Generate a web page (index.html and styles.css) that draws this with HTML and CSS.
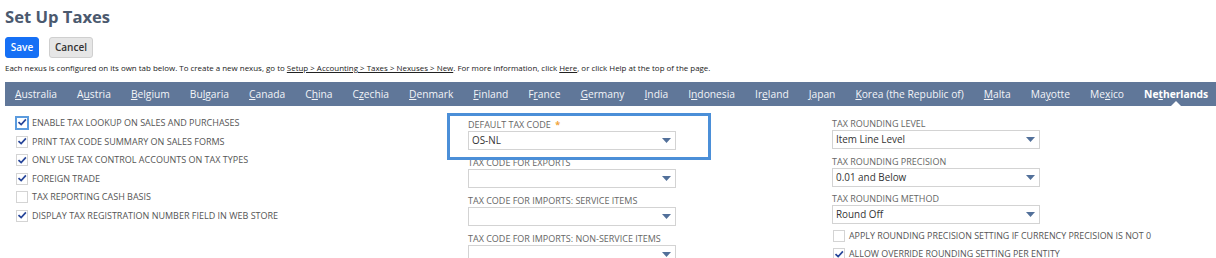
FILE: index.html
```html
<!DOCTYPE html>
<html lang="en">
<head>
<meta charset="utf-8">
<title>Set Up Taxes</title>
<link rel="stylesheet" href="styles.css">
</head>
<body>
<div class="page">
  <h1 class="title">Set Up Taxes</h1>
  <div class="buttons">
    <button class="btn btn-primary">Save</button>
    <button class="btn btn-secondary">Cancel</button>
  </div>
  <p class="info">Each nexus is configured on its own tab below. To create a new nexus, go to <a href="#">Setup &gt; Accounting &gt; Taxes &gt; Nexuses &gt; New</a>. For more information, click <a href="#">Here</a>, or click Help at the top of the page.</p>
  <nav class="tabs">
    <span class="tab"><u>A</u>ustralia</span>
    <span class="tab">A<u>u</u>stria</span>
    <span class="tab"><u>B</u>elgium</span>
    <span class="tab">Bu<u>l</u>garia</span>
    <span class="tab"><u>C</u>anada</span>
    <span class="tab">C<u>h</u>ina</span>
    <span class="tab">C<u>z</u>echia</span>
    <span class="tab"><u>D</u>enmark</span>
    <span class="tab"><u>F</u>inland</span>
    <span class="tab">F<u>r</u>ance</span>
    <span class="tab"><u>G</u>ermany</span>
    <span class="tab"><u>I</u>ndia</span>
    <span class="tab">I<u>n</u>donesia</span>
    <span class="tab">Ir<u>e</u>land</span>
    <span class="tab"><u>J</u>apan</span>
    <span class="tab"><u>K</u>orea (the Republic of)</span>
    <span class="tab"><u>M</u>alta</span>
    <span class="tab">Ma<u>y</u>otte</span>
    <span class="tab">Me<u>x</u>ico</span>
    <span class="tab tab-active">Ne<u>t</u>herlands</span>
  </nav>
  <div class="form">
    <div class="col col-left">
      <div class="check-row"><span class="cb cb-focus"><svg viewBox="0 0 12 12" class="tick"><path d="M2.5 6.2 L5 8.6 L10 3"/></svg></span><span class="cb-label">Enable tax lookup on sales and purchases</span></div>
      <div class="check-row"><span class="cb"><svg viewBox="0 0 12 12" class="tick"><path d="M2.5 6.2 L5 8.6 L10 3"/></svg></span><span class="cb-label">Print tax code summary on sales forms</span></div>
      <div class="check-row"><span class="cb"><svg viewBox="0 0 12 12" class="tick"><path d="M2.5 6.2 L5 8.6 L10 3"/></svg></span><span class="cb-label">Only use tax control accounts on tax types</span></div>
      <div class="check-row"><span class="cb"><svg viewBox="0 0 12 12" class="tick"><path d="M2.5 6.2 L5 8.6 L10 3"/></svg></span><span class="cb-label">Foreign trade</span></div>
      <div class="check-row"><span class="cb cb-empty"></span><span class="cb-label">Tax reporting cash basis</span></div>
      <div class="check-row"><span class="cb"><svg viewBox="0 0 12 12" class="tick"><path d="M2.5 6.2 L5 8.6 L10 3"/></svg></span><span class="cb-label">Display tax registration number field in web store</span></div>
    </div>
    <div class="col col-mid">
      <div class="field">
        <div class="field-label">Default tax code <span class="req">*</span></div>
        <div class="select"><span class="select-val">OS-NL</span><svg class="arrow" viewBox="0 0 9 5"><polygon points="0,0 9,0 4.5,5"/></svg></div>
      </div>
      <div class="field">
        <div class="field-label">Tax code for exports</div>
        <div class="select"><span class="select-val"></span><svg class="arrow" viewBox="0 0 9 5"><polygon points="0,0 9,0 4.5,5"/></svg></div>
      </div>
      <div class="field">
        <div class="field-label">Tax code for imports: service items</div>
        <div class="select"><span class="select-val"></span><svg class="arrow" viewBox="0 0 9 5"><polygon points="0,0 9,0 4.5,5"/></svg></div>
      </div>
      <div class="field">
        <div class="field-label">Tax code for imports: non-service items</div>
        <div class="select"><span class="select-val"></span><svg class="arrow" viewBox="0 0 9 5"><polygon points="0,0 9,0 4.5,5"/></svg></div>
      </div>
    </div>
    <div class="col col-right">
      <div class="field field-r">
        <div class="field-label">Tax rounding level</div>
        <div class="select"><span class="select-val">Item Line Level</span><svg class="arrow" viewBox="0 0 9 5"><polygon points="0,0 9,0 4.5,5"/></svg></div>
      </div>
      <div class="field field-r">
        <div class="field-label">Tax rounding precision</div>
        <div class="select"><span class="select-val">0.01 and Below</span><svg class="arrow" viewBox="0 0 9 5"><polygon points="0,0 9,0 4.5,5"/></svg></div>
      </div>
      <div class="field field-r">
        <div class="field-label">Tax rounding method</div>
        <div class="select"><span class="select-val">Round Off</span><svg class="arrow" viewBox="0 0 9 5"><polygon points="0,0 9,0 4.5,5"/></svg></div>
      </div>
      <div class="right-checks">
        <div class="check-row check-row-r"><span class="cb cb-empty"></span><span class="cb-label">Apply rounding precision setting if currency precision is not 0</span></div>
        <div class="check-row check-row-r"><span class="cb"><svg viewBox="0 0 12 12" class="tick"><path d="M2.5 6.2 L5 8.6 L10 3"/></svg></span><span class="cb-label">Allow override rounding setting per entity</span></div>
      </div>
    </div>
    <div class="highlight"></div>
  </div>
</div>
</body>
</html>
```

FILE: styles.css
```css
* { box-sizing: border-box; }

html, body {
  margin: 0;
  padding: 0;
  background: #ffffff;
  overflow: hidden;
}

body {
  font-family: "Open Sans", "Liberation Sans", sans-serif;
  color: #333;
  width: 1216px;
  height: 258px;
}

.page {
  position: relative;
}

.title {
  margin: 0;
  padding: 4px 0 0 5px;
  font-size: 16.6px;
  line-height: 26px;
  font-weight: 700;
  color: #4b596e;
}

.buttons {
  display: flex;
  gap: 10px;
  padding-left: 5px;
  margin-top: 7px;
}

.btn {
  height: 21px;
  font-family: "Open Sans", "Liberation Sans", sans-serif;
  font-size: 10px;
  font-weight: 600;
  border-radius: 3px;
  padding: 0;
  line-height: 19px;
  cursor: pointer;
}

.btn-primary {
  background: #1670f5;
  border: 1px solid #1670f5;
  color: #fff;
  width: 34px;
}

.btn-secondary {
  background: #e6e6e6;
  border: 1px solid #cfcfcf;
  color: #333;
  width: 44px;
}

.info {
  margin: 5px 0 0 5px;
  font-size: 7.95px;
  line-height: 10px;
  color: #222;
  white-space: nowrap;
}

.info a {
  color: #222;
  text-decoration: underline;
}

.tabs {
  margin: 9px 0 0 5px;
  height: 24px;
  background: #607799;
  display: flex;
  align-items: center;
  white-space: nowrap;
  position: relative;
}

.tab {
  color: #f2f4f8;
  font-size: 10.25px;
  padding: 0 10px;
  line-height: 24px;
  position: relative;
}

.tab u {
  text-decoration-thickness: 1px;
  text-underline-offset: 1px;
}

.tab-active {
  font-weight: 700;
  color: #ffffff;
}

.tab-active::after {
  content: "";
  position: absolute;
  left: 50%;
  bottom: 0;
  margin-left: -5px;
  border-left: 5px solid transparent;
  border-right: 5px solid transparent;
  border-bottom: 5px solid #ffffff;
}

.form {
  position: relative;
  display: grid;
  grid-template-columns: 453px 364px 1fr;
  padding-left: 15px;
}

.col-left {
  padding-top: 7.7px;
}

.check-row {
  display: flex;
  align-items: center;
  height: 18.6px;
}

.cb {
  width: 12px;
  height: 12px;
  border: 1px solid #d4d4d4;
  background: #fff;
  display: flex;
  align-items: center;
  justify-content: center;
  margin-left: 1px;
  margin-right: 4px;
  flex: none;
}

.cb-focus {
  width: 14px;
  height: 14px;
  margin-left: 0;
  margin-right: 3px;
  border: 2px solid #5b9bde;
}

.tick {
  width: 11px;
  height: 11px;
  fill: none;
  stroke: #27469a;
  stroke-width: 2;
  stroke-linecap: square;
}

.cb-label {
  font-size: 9px;
  text-transform: uppercase;
  color: #555;
  line-height: 12px;
  white-space: nowrap;
}

.col-mid {
  padding-top: 13px;
}

.field {
  margin-bottom: 7px;
}

.field-r {
  margin-bottom: 6.5px;
}

.field-label {
  font-size: 9px;
  line-height: 12px;
  height: 12px;
  text-transform: uppercase;
  color: #666;
  white-space: nowrap;
}

.req {
  color: #f0a43a;
  font-weight: 700;
  margin-left: 2px;
}

.select {
  width: 208px;
  height: 19px;
  border: 1px solid #d3d3d3;
  background: #fff;
  display: flex;
  align-items: center;
  justify-content: space-between;
  padding: 0 4px 0 3px;
}

.select-val {
  font-size: 9.9px;
  color: #333;
  line-height: 17px;
}

.arrow {
  width: 9px;
  height: 5px;
  fill: #52709a;
  flex: none;
}

.col-right {
  padding-top: 12px;
}

.right-checks {
  margin-top: -3.5px;
}

.check-row-r {
  height: 18px;
}

.check-row-r .cb-label {
  font-size: 8.9px;
}

.highlight {
  position: absolute;
  left: 447px;
  top: 7px;
  width: 264px;
  height: 47px;
  border: 3px solid #4b8fd8;
  pointer-events: none;
}
```
